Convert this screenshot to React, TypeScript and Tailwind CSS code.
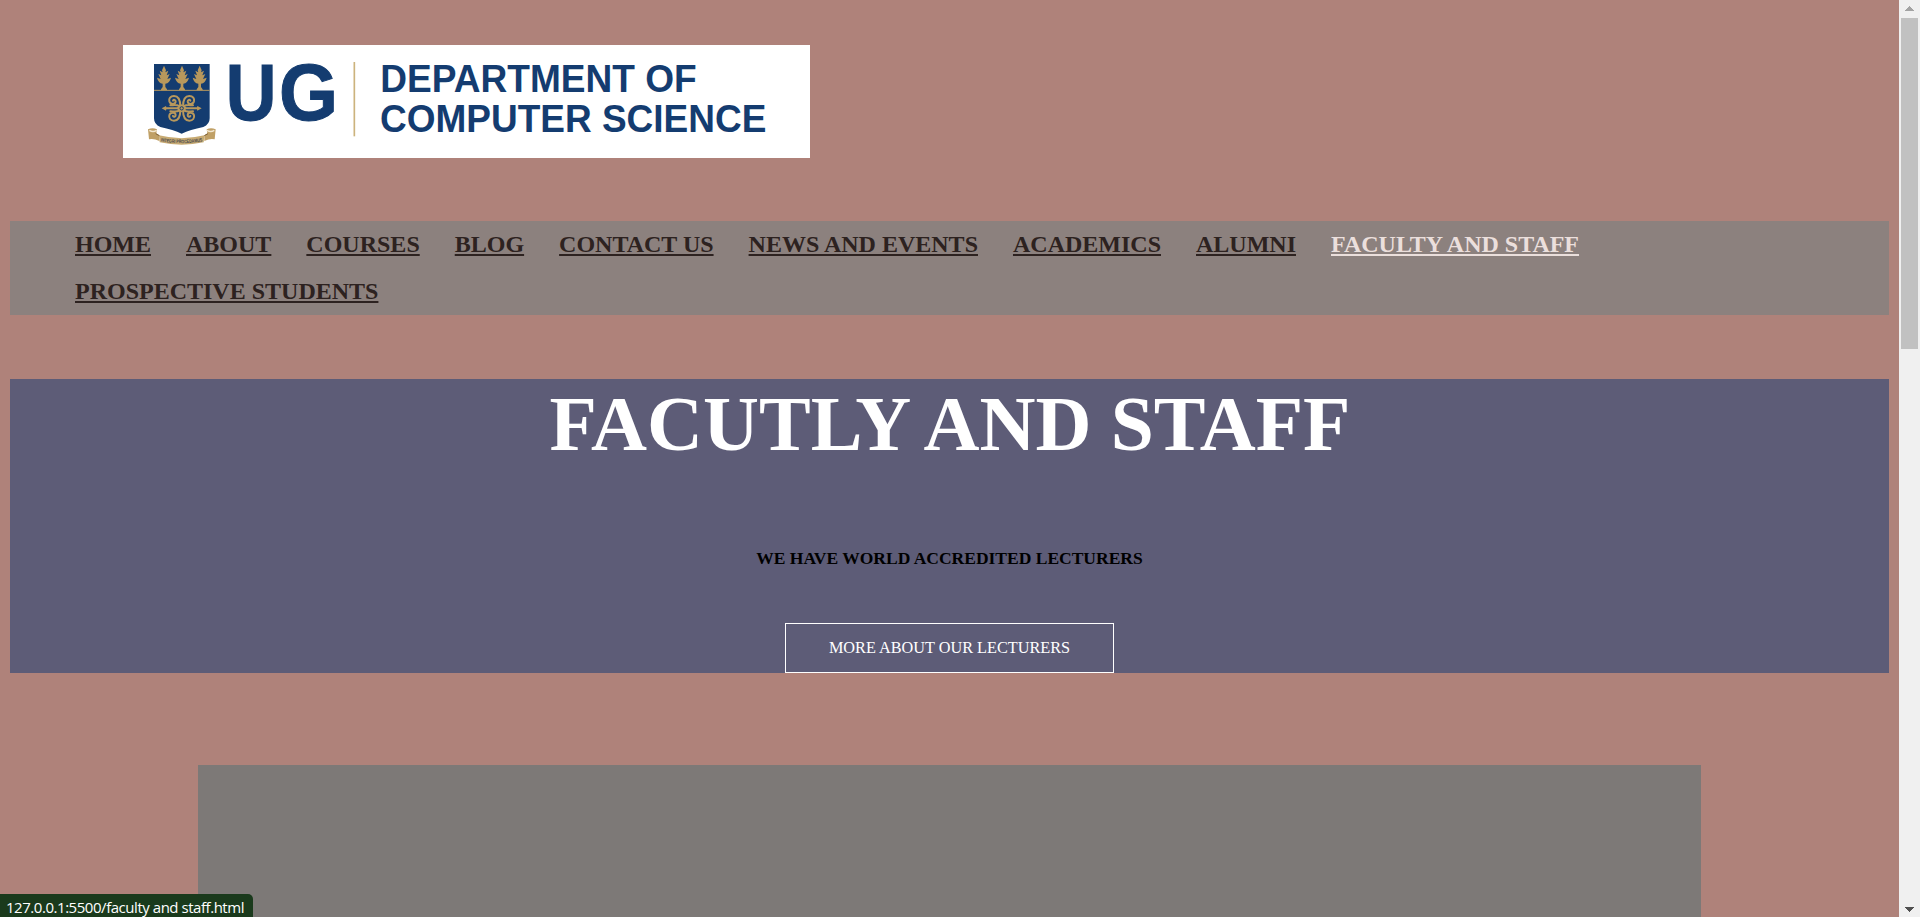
const links = [
  'HOME',
  'ABOUT',
  'COURSES',
  'BLOG',
  'CONTACT US',
  'NEWS AND EVENTS',
  'ACADEMICS',
  'ALUMNI',
  'FACULTY AND STAFF',
  'PROSPECTIVE STUDENTS',
];

function Tree({ x }: { x: number }) {
  return (
    <path
      transform={`translate(${x} 92)`}
      fill="#b8985c"
      d="M0 0 L6 14 L4 20 L13 15 L8 29 L17 25 L10 40 L21 36 Q17 52 4 54 V64 L9 71 V74 H-9 V71 L-4 64 V54 Q-17 52 -21 36 L-10 40 L-17 25 L-8 29 L-13 15 L-4 20 L-6 14 Z"
    />
  );
}

function Curl({ flip }: { flip: string }) {
  return (
    <path
      transform={`translate(215 220) ${flip}`}
      fill="none"
      stroke="#b8985c"
      strokeWidth="6"
      strokeLinecap="round"
      d="M4 -5 C4 -27 11 -37 23 -37 C34 -37 39 -29 37 -21 C34 -11 19 -11 18 -20 C18 -26 24 -27 26 -23 M8 -7 C15 -12 25 -9 34 -9"
    />
  );
}

function Logo() {
  return (
    <svg className="block h-[113px] w-[687px] bg-white" viewBox="39 30 2061 339">
      <path d="M132 87 H299 V250 Q299 268 280 276 Q240 284 215 296 Q190 284 151 276 Q132 268 132 250 Z" fill="#143c70" />
      <path d="M132 166 H299" stroke="#b8985c" strokeWidth="3" />
      <Tree x={162} />
      <Tree x={216} />
      <Tree x={269} />
      <Curl flip="scale(1 1)" />
      <Curl flip="scale(-1 1)" />
      <Curl flip="scale(1 -1)" />
      <Curl flip="scale(-1 -1)" />
      <path d="M155 220 L168 213 L169 217 L201 217 L215 208 L229 217 L261 217 L262 213 L275 220 L262 227 L261 223 L229 223 L215 232 L201 223 L169 223 L168 227 Z" fill="#b8985c" />
      <circle cx="215" cy="220" r="5" fill="#b8985c" stroke="#143c70" strokeWidth="3" />
      <path d="M114 283 Q128 276 141 283 L139 295 L148 301 V318 Q130 309 117 313 Z M317 283 Q303 276 290 283 L292 295 L283 301 V318 Q301 309 314 313 Z" fill="#c0a066" />
      <path d="M147 301 Q215 318 283 301 L281 322 Q215 336 149 322 Z" fill="#c7aa73" />
      <path d="M118 286 Q129 293 140 286 M313 286 Q302 293 291 286" stroke="#f3e8d2" strokeWidth="4" fill="none" />
      <path d="M137 296 L148 302 M294 296 L283 302" stroke="#80643a" strokeWidth="3" />
      <path id="motto" d="M152 319 Q215 330 280 319" fill="none" />
      <text fontFamily="Liberation Sans, sans-serif" fontSize="15" fontWeight="700" fill="#4b4b4d">
        <textPath href="#motto" textLength="126" lengthAdjust="spacingAndGlyphs">INTEGRI PROCEDAMUS</textPath>
      </text>
      <g fontFamily="Liberation Sans, sans-serif" fontWeight="700" fill="#143c70">
        <text x="347" y="255" fontSize="240" textLength="152" lengthAdjust="spacingAndGlyphs" stroke="#143c70" strokeWidth="3">U</text>
        <text x="507" y="255" fontSize="240" textLength="177" lengthAdjust="spacingAndGlyphs" stroke="#143c70" strokeWidth="3">G</text>
        <text x="811" y="171" fontSize="118" textLength="949" lengthAdjust="spacingAndGlyphs">DEPARTMENT OF</text>
        <text x="810" y="290" fontSize="118" textLength="1159" lengthAdjust="spacingAndGlyphs">COMPUTER SCIENCE</text>
      </g>
      <path d="M733 81 V304" stroke="#ccb37d" strokeWidth="5" />
    </svg>
  );
}

export default function App() {
  return (
    <div className="relative flex h-[917px] w-full overflow-hidden bg-[#af827a] font-['Liberation_Serif',serif]">
      <main className="min-w-0 flex-1 px-2.5">
        <header className="pt-[45px] pl-[113px]">
          <Logo />
        </header>

        <nav className="mt-[63px] h-[94px] bg-[#8c817e] pl-[65px] pr-[200px]">
          <ul className="flex flex-wrap gap-x-[35px]">
            {links.map((label) => (
              <li key={label} className="h-[47px] whitespace-nowrap pt-[10px] text-[24px] leading-[27px] font-bold">
                <a
                  href="#"
                  className={
                    label === 'FACULTY AND STAFF'
                      ? 'text-[#ebdfdc] underline decoration-2 underline-offset-2 [text-decoration-skip-ink:none]'
                      : 'text-[#2d2220] underline decoration-2 underline-offset-2 [text-decoration-skip-ink:none]'
                  }
                >
                  {label}
                </a>
              </li>
            ))}
          </ul>
        </nav>

        <section className="mt-16 flex h-[294px] flex-col items-center bg-[#5d5c77]">
          <h1 className="whitespace-nowrap pt-px pl-px text-[77.5px] leading-[89px] font-bold text-white">FACUTLY AND STAFF</h1>
          <p className="mt-[79px] text-[17.5px] leading-5 font-bold text-black">WE HAVE WORLD ACCREDITED LECTURERS</p>
          <a href="#" className="mt-auto flex h-[50px] w-[329px] items-center justify-center border border-white text-[16.25px] text-white">
            MORE ABOUT OUR LECTURERS
          </a>
        </section>

        <section className="mx-[188px] mt-[92px] h-[152px] bg-[#7d7977]" />
      </main>

      <aside className="flex w-[21px] shrink-0 flex-col items-center bg-[#f0f0f0]">
        <svg className="h-[18px] w-[21px] shrink-0" viewBox="0 0 21 18" shapeRendering="crispEdges">
          <path d="M6 11 L10.5 6 L15 11 Z" fill="#a3a3a3" />
        </svg>
        <div className="h-[331px] w-[17px] bg-[#c1c1c1]" />
        <svg className="mt-auto h-[18px] w-[21px] shrink-0" viewBox="0 0 21 18" shapeRendering="crispEdges">
          <path d="M6 8 L15 8 L10.5 13 Z" fill="#505050" />
        </svg>
      </aside>

      <div className="absolute bottom-0 left-0 flex h-[23px] w-[253px] items-center rounded-tr-[5px] bg-[#1a3a1c] pt-0.5 pl-[6px] font-['Open_Sans','Noto_Sans',sans-serif] text-[15px] leading-5 whitespace-nowrap text-white">
        <span className="tracking-[-0.46px]">127.0.0.1:5500/faculty and staff.html</span>
      </div>
    </div>
  );
}
